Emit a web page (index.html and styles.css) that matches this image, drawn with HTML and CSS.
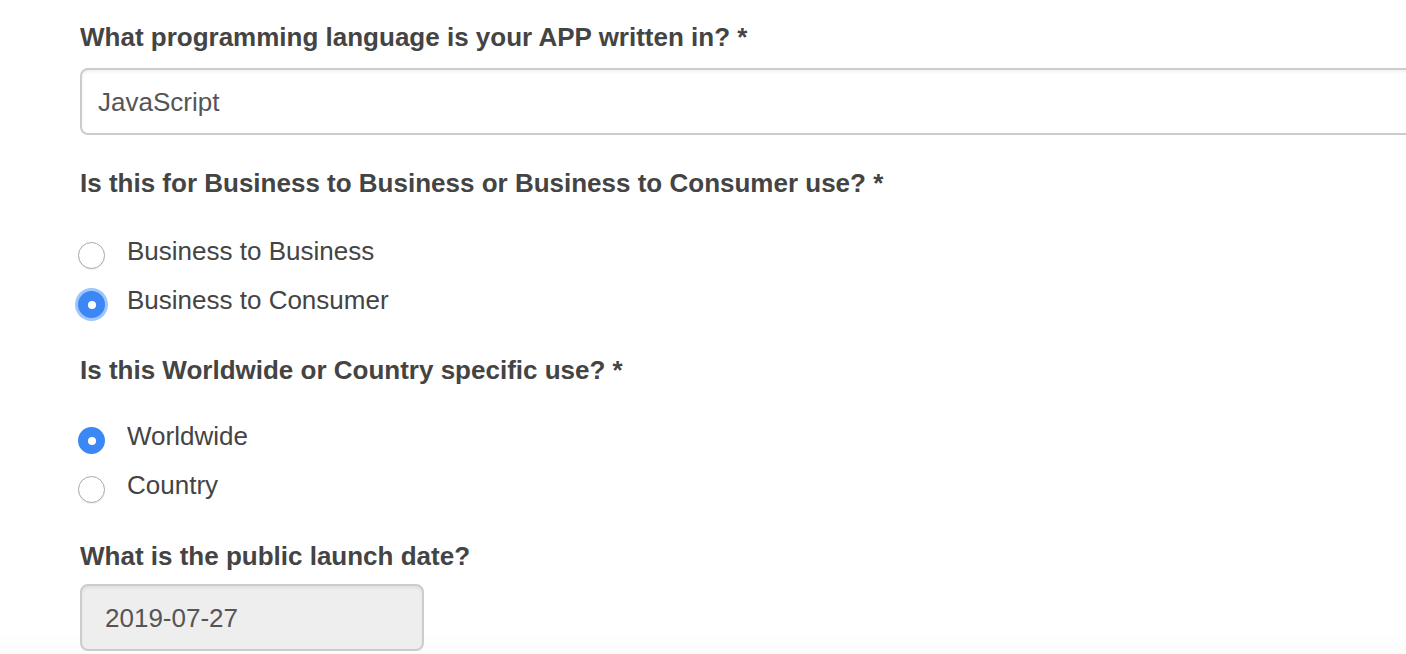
FILE: index.html
```html
<!DOCTYPE html>
<html lang="en">
<head>
<meta charset="utf-8">
<title>App form</title>
<link rel="stylesheet" href="styles.css">
</head>
<body>
<form class="form">
  <div class="form-group">
    <label class="control-label">What programming language is your APP written in? *</label>
    <div class="text-input">JavaScript</div>
  </div>

  <div class="form-group">
    <label class="control-label">Is this for Business to Business or Business to Consumer use? *</label>
    <div class="radio-group">
      <div class="radio-row"><span class="radio"></span><span class="radio-text">Business to Business</span></div>
      <div class="radio-row"><span class="radio checked focused"></span><span class="radio-text">Business to Consumer</span></div>
    </div>
  </div>

  <div class="form-group">
    <label class="control-label">Is this Worldwide or Country specific use? *</label>
    <div class="radio-group radio-group-tight">
      <div class="radio-row"><span class="radio checked"></span><span class="radio-text">Worldwide</span></div>
      <div class="radio-row"><span class="radio"></span><span class="radio-text">Country</span></div>
    </div>
  </div>

  <div class="form-group">
    <label class="control-label control-label-date">What is the public launch date?</label>
    <div class="date-input">2019-07-27</div>
  </div>
</form>
</body>
</html>
```

FILE: styles.css
```css
html, body {
  margin: 0;
  padding: 0;
  overflow: hidden;
  height: 100%;
}
body {
  background: linear-gradient(to bottom, #ffffff 0, #ffffff 632px, #fbfbfb 654px);
  font-family: "Liberation Sans", Arial, Helvetica, sans-serif;
  color: #444;
}
.form {
  display: flex;
  flex-direction: column;
  padding: 19px 0 0 80px;
  width: 1500px;
}
.form-group {
  display: flex;
  flex-direction: column;
  align-items: flex-start;
}
.form-group + .form-group {
  margin-top: 30px;
}
.control-label {
  display: block;
  font-size: 26px;
  line-height: 37px;
  font-weight: bold;
  color: #444;
  margin-bottom: 12px;
}
.control-label-date {
  margin-bottom: 9px;
}
.text-input,
.date-input {
  box-sizing: border-box;
  height: 67px;
  border: 2px solid #cccccc;
  border-radius: 8px;
  box-shadow: inset 0 2px 3px rgba(0, 0, 0, 0.06);
  font-size: 26px;
  line-height: 30px;
  color: #555;
  display: flex;
  align-items: center;
  padding-top: 1px;
}
.text-input {
  width: 1500px;
  padding-left: 16px;
  background: #fff;
}
.date-input {
  width: 344px;
  padding-left: 23px;
  background: #eeeeee;
}
.radio-group {
  display: flex;
  flex-direction: column;
  gap: 12px;
  padding-top: 19px;
  margin-bottom: 3px;
}
.radio-group-tight {
  padding-top: 17px;
  margin-bottom: 4px;
}
.radio-row {
  display: flex;
  align-items: flex-start;
  height: 37px;
}
.radio {
  box-sizing: border-box;
  width: 27px;
  height: 27px;
  margin: 9px 22px 0 -2px;
  border-radius: 50%;
  border: 1px solid #a8a8a8;
  background: #ffffff;
  box-shadow: 0 1px 1px rgba(0, 0, 0, 0.06);
  position: relative;
  flex: none;
}
.radio.checked {
  border: none;
  background: #3b87f6;
  box-shadow: none;
}
.radio.checked::after {
  content: "";
  position: absolute;
  left: 50%;
  top: 50%;
  width: 8px;
  height: 8px;
  margin: -4px 0 0 -4px;
  border-radius: 50%;
  background: #fff;
}
.radio.focused {
  box-shadow: 0 0 0 3px rgba(80, 150, 250, 0.55);
}
.radio-text {
  font-size: 26px;
  line-height: 37px;
  color: #444;
}
```
